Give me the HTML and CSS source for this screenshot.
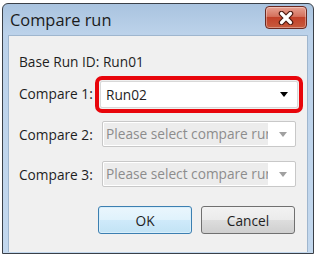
FILE: index.html
```html
<!DOCTYPE html>
<html>
<head>
<meta charset="utf-8">
<link rel="stylesheet" href="styles.css">
</head>
<body>
<div class="window">
  <div class="titlebar">
    <span class="title">Compare run</span>
    <div class="close">
      <svg width="18" height="14" viewBox="0 0 18 14">
        <path d="M4.5 2.5 L13.5 11.5 M13.5 2.5 L4.5 11.5" stroke="#4a1810" stroke-width="5.5" stroke-linecap="round"/>
        <path d="M4.5 2.5 L13.5 11.5 M13.5 2.5 L4.5 11.5" stroke="#ffffff" stroke-width="3.2" stroke-linecap="round"/>
      </svg>
    </div>
  </div>
  <div class="client">
    <div class="row base">Base Run ID: Run01</div>
    <div class="row">
      <span class="label">Compare 1:</span>
      <div class="highlight">
        <div class="combo active">
          <span class="value">Run02</span>
          <span class="arrow dark"></span>
        </div>
      </div>
    </div>
    <div class="row">
      <span class="label">Compare 2:</span>
      <div class="combo disabled">
        <span class="placeholder">Please select compare run</span>
        <span class="arrow"></span>
      </div>
    </div>
    <div class="row">
      <span class="label">Compare 3:</span>
      <div class="combo disabled">
        <span class="placeholder">Please select compare run</span>
        <span class="arrow"></span>
      </div>
    </div>
    <div class="buttons">
      <button class="btn default">OK</button>
      <button class="btn">Cancel</button>
    </div>
  </div>
</div>
</body>
</html>
```

FILE: styles.css
```css
html, body {
  margin: 0;
  padding: 0;
  background: #ffffff;
}
body {
  padding: 3px 0 0 2px;
  font-family: "Open Sans", "Noto Sans", sans-serif;
}
.window {
  width: 310px;
  height: 249px;
  border: 1px solid #3a4048;
  border-radius: 6px 6px 0 0;
  background: linear-gradient(#a9c3df, #bcd2ea 30px, #c3d8ee);
  display: flex;
  flex-direction: column;
  box-sizing: content-box;
}
.titlebar {
  height: 31px;
  display: flex;
  align-items: center;
  justify-content: space-between;
  padding: 0 6px 0 7px;
}
.title {
  font-size: 16.4px;
  color: #1b1b1b;
  margin-top: -1px;
}
.close {
  width: 40px;
  height: 21px;
  margin-top: -4px;
  border: 1px solid #6b2a22;
  border-radius: 4px;
  background: linear-gradient(#e7a293, #d4715d 45%, #c2412a 50%, #c75b3e);
  display: flex;
  align-items: center;
  justify-content: center;
  box-shadow: inset 0 0 0 1px rgba(255,255,255,0.35);
}
.client {
  flex: 1;
  margin: 0 5px 1px 5px;
  background: #f0f0f0;
  border: 1px solid #9fb6ce;
  border-bottom: none;
  padding: 14px 0 0 10px;
  font-size: 13.7px;
  color: #1e1e1e;
}
.row {
  display: flex;
  align-items: center;
}
.base {
  height: 22px;
}
.label {
  width: 83px;
  flex: none;
}
.highlight {
  border: 4px solid #e8050b;
  border-radius: 7px;
  padding: 1px;
  width: 198px;
  margin-left: -7px;
  margin-top: 4px;
  margin-bottom: 1px;
}
.combo {
  border: 1px solid #c8c8c8;
  border-radius: 2px;
  display: flex;
  align-items: center;
  box-sizing: border-box;
  background: #ffffff;
}
.combo.active {
  height: 27px;
  border-color: #d8d8d8;
}
.combo.disabled {
  width: 194px;
  height: 26px;
  margin: 7px 0 7px 0;
}
.value {
  padding-left: 5px;
  flex: 1;
}
.placeholder {
  background: #ececec;
  color: #8c8c8c;
  width: 164px;
  margin: 1px;
  height: 22px;
  line-height: 22px;
  padding-left: 2px;
  white-space: nowrap;
  overflow: hidden;
  box-sizing: border-box;
}
.arrow {
  width: 0;
  height: 0;
  border-left: 4px solid transparent;
  border-right: 4px solid transparent;
  border-top: 5px solid #a0a0a0;
  margin-left: auto;
  margin-right: 8px;
}
.arrow.dark {
  border-top-color: #000000;
  margin-right: 9px;
}
.buttons {
  display: flex;
  gap: 9px;
  margin: 12px 0 0 79px;
}
.btn {
  width: 94px;
  height: 28px;
  font-family: "Open Sans", "Noto Sans", sans-serif;
  font-size: 13.7px;
  color: #1e1e1e;
  border: 1px solid #707070;
  border-radius: 3px;
  background: linear-gradient(#f2f2f2 0%, #ebebeb 50%, #dddddd 51%, #cfcfcf 100%);
  padding: 0;
}
.btn.default {
  border-color: #3c7fb1;
  background: linear-gradient(#eaf6fd 0%, #dff2fc 50%, #cfeafa 51%, #c2e3f5 100%);
  box-shadow: inset 0 0 0 1px #d8eefa;
  font-weight: 500;
}
```
